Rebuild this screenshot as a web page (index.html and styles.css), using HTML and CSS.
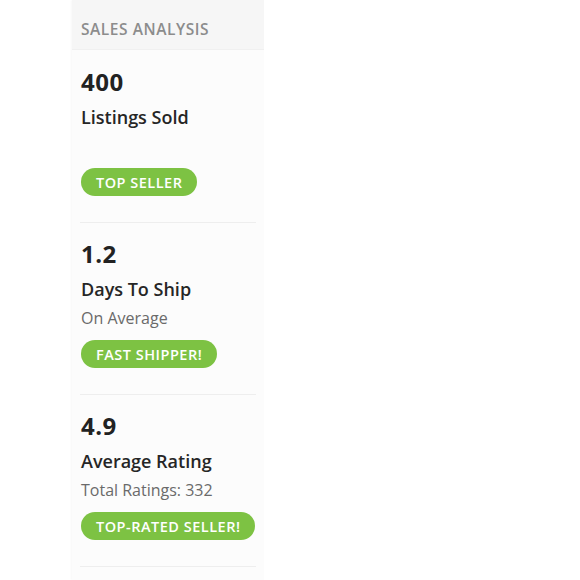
FILE: index.html
```html
<!DOCTYPE html>
<html>
<head>
<meta charset="utf-8">
<link rel="stylesheet" href="styles.css">
</head>
<body>
<aside class="panel">
  <header class="panel-header">SALES ANALYSIS</header>
  <section class="stat">
    <div class="stat-value">400</div>
    <div class="stat-label">Listings Sold</div>
    <div class="stat-sub">&nbsp;</div>
    <div class="badge-row"><span class="badge">TOP SELLER</span></div>
  </section>
  <section class="stat">
    <div class="stat-value">1.2</div>
    <div class="stat-label">Days To Ship</div>
    <div class="stat-sub">On Average</div>
    <div class="badge-row"><span class="badge">FAST SHIPPER!</span></div>
  </section>
  <section class="stat">
    <div class="stat-value">4.9</div>
    <div class="stat-label">Average Rating</div>
    <div class="stat-sub">Total Ratings: 332</div>
    <div class="badge-row"><span class="badge">TOP-RATED SELLER!</span></div>
  </section>
</aside>
</body>
</html>
```
FILE: styles.css
```css
html, body {
  margin: 0;
  padding: 0;
  background: #ffffff;
}
body {
  font-family: "Open Sans", Lato, Arial, sans-serif;
  color: #222222;
}
.panel {
  margin-left: 72px;
  width: 192px;
  min-height: 580px;
  background: #fcfcfc;
  box-shadow: -1px 0 2px rgba(0,0,0,0.03);
}
.panel-header {
  height: 50px;
  border-bottom: 1px solid #f0f0f0;
  background: #f6f6f6;
  padding-left: 9px;
  padding-top: 8px;
  display: flex;
  align-items: center;
  font-size: 15.5px;
  font-weight: 600;
  letter-spacing: 0.55px;
  color: #8c8c8c;
  box-sizing: border-box;
}
.stat {
  margin-left: 8px;
  margin-right: 8px;
  padding: 18px 0 26px 1px;
  border-bottom: 1px solid #eeeeee;
  display: flex;
  flex-direction: column;
}
.stat + .stat {
  padding-top: 17px;
}
.stat-value {
  font-size: 24px;
  line-height: 28px;
  font-weight: 700;
  letter-spacing: 0.5px;
  color: #222222;
}
.stat-label {
  margin-top: 9px;
  font-size: 18px;
  line-height: 24px;
  font-weight: 600;
  color: #262626;
}
.stat-sub {
  margin-top: 6px;
  font-size: 16px;
  line-height: 22px;
  color: #6a6a6a;
}
.badge-row {
  margin-top: 11px;
  display: flex;
}
.badge {
  height: 28px;
  border-radius: 14px;
  background: #7dc243;
  color: #ffffff;
  font-size: 14.5px;
  font-weight: 600;
  letter-spacing: 0.5px;
  padding: 0 15px;
  display: flex;
  align-items: center;
}
```
